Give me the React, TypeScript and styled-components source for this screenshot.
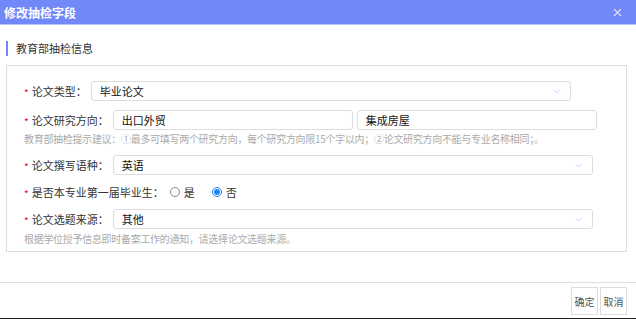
import React from 'react';
import styled, { createGlobalStyle } from 'styled-components';
import { ChevronDown, X } from 'lucide-react';

const GlobalStyle = createGlobalStyle`
  html, body {
    margin: 0;
    padding: 0;
    background: #fff;
  }
  * {
    box-sizing: border-box;
  }
`;

const FONT = `'Noto Sans CJK SC', 'Noto Sans', 'Liberation Sans', sans-serif`;

const App: React.FC = () => {
  return (
    <>
      <GlobalStyle />
      <Dialog>
        <Header>
          <span>修改抽检字段</span>
          <CloseBtn>
            <X size={13} strokeWidth={2} />
          </CloseBtn>
        </Header>
        <Body>
          <SectionTitle>教育部抽检信息</SectionTitle>
          <FormBox>
            <Row>
              <Label>论文类型：</Label>
              <Select>
                <span>毕业论文</span>
                <ChevronDown size={11} strokeWidth={1.5} />
              </Select>
            </Row>
            <Row $gap={9}>
              <Label>论文研究方向：</Label>
              <InputPair>
                <Input>出口外贸</Input>
                <Input>集成房屋</Input>
              </InputPair>
            </Row>
            <Hint>
              教育部抽检提示建议：①最多可填写两个研究方向，每个研究方向限15个字以内；②论文研究方向不能与专业名称相同；。
            </Hint>
            <Row $gap={10}>
              <Label>论文撰写语种：</Label>
              <Select>
                <span>英语</span>
                <ChevronDown size={11} strokeWidth={1.5} />
              </Select>
            </Row>
            <Row $gap={7}>
              <Label>是否本专业第一届毕业生：</Label>
              <RadioItem>
                <RadioDot />
                是
              </RadioItem>
              <RadioItem>
                <RadioDot $checked />
                否
              </RadioItem>
            </Row>
            <Row $gap={7}>
              <Label>论文选题来源：</Label>
              <Select>
                <span>其他</span>
                <ChevronDown size={11} strokeWidth={1.5} />
              </Select>
            </Row>
            <Hint $top={3}>根据学位授予信息即时备案工作的通知，请选择论文选题来源。</Hint>
          </FormBox>
        </Body>
        <Footer>
          <FooterBtn>确定</FooterBtn>
          <FooterBtn>取消</FooterBtn>
        </Footer>
      </Dialog>
    </>
  );
};

const Dialog = styled.div`
  width: 636px;
  height: 319px;
  display: flex;
  flex-direction: column;
  font-family: ${FONT};
  background: #fff;
  border-bottom: 1px solid #222;
`;

const Header = styled.div`
  height: 25px;
  flex-shrink: 0;
  background: #7088f8;
  border-bottom: 1px solid #b8c4fb;
  display: flex;
  align-items: center;
  justify-content: space-between;
  padding: 0 12px 0 4px;
  color: #fff;
  font-size: 12px;
  font-weight: bold;
`;

const CloseBtn = styled.span`
  display: flex;
  align-items: center;
  color: #dce2fd;
`;

const Body = styled.div`
  flex: 1;
  padding: 16px 9px 0 6px;
`;

const SectionTitle = styled.div`
  border-left: 2px solid #7088f8;
  padding-left: 8px;
  height: 15px;
  line-height: 15px;
  font-size: 11px;
  color: #333;
  margin-bottom: 9px;
`;

const FormBox = styled.div`
  border: 1px solid #ddd;
  padding: 15px 0 6px 17px;
  display: flex;
  flex-direction: column;
`;

const Row = styled.div<{ $gap?: number }>`
  display: flex;
  align-items: center;
  height: 20px;
  margin-top: ${(p) => p.$gap ?? 0}px;
`;

const Label = styled.span`
  font-size: 11px;
  color: #333;
  white-space: nowrap;
  margin-right: 4px;
  &::before {
    content: '*';
    color: #e00;
    font-size: 10px;
    margin-right: 3px;
    position: relative;
    top: 1px;
  }
`;

const Select = styled.div`
  width: 480px;
  height: 20px;
  border: 1px solid #ddd;
  border-radius: 3px;
  display: flex;
  align-items: center;
  justify-content: space-between;
  padding: 0 8px 0 8px;
  font-size: 11px;
  color: #111;
  svg {
    color: #a9b8f6;
  }
`;

const InputPair = styled.div`
  display: flex;
  gap: 4px;
`;

const Input = styled.div`
  width: 240px;
  height: 20px;
  border: 1px solid #ddd;
  border-radius: 3px;
  display: flex;
  align-items: center;
  padding: 0 8px;
  font-size: 11px;
  color: #111;
`;

const Hint = styled.div<{ $top?: number }>`
  font-size: 10px;
  color: #aaa;
  line-height: 13px;
  margin-top: ${(p) => p.$top ?? 2}px;
  white-space: nowrap;
  letter-spacing: -0.3px;
`;

const RadioItem = styled.label`
  display: flex;
  align-items: center;
  gap: 4px;
  font-size: 11px;
  color: #333;
  margin-right: 15px;
`;

const RadioDot = styled.span<{ $checked?: boolean }>`
  width: 10px;
  height: 10px;
  border-radius: 50%;
  border: 1px solid ${(p) => (p.$checked ? '#1f86ee' : '#888')};
  display: flex;
  align-items: center;
  justify-content: center;
  margin-left: 2px;
  &::after {
    content: '';
    width: 6px;
    height: 6px;
    border-radius: 50%;
    background: ${(p) => (p.$checked ? '#1f86ee' : 'transparent')};
  }
`;

const Footer = styled.div`
  height: 36px;
  flex-shrink: 0;
  border-top: 1px solid #ddd;
  display: flex;
  justify-content: flex-end;
  align-items: flex-start;
  gap: 2px;
  padding: 4px 9px 0 0;
`;

const FooterBtn = styled.button`
  width: 27px;
  height: 28px;
  padding: 0;
  border: 1px solid #ddd;
  background: #fff;
  font-family: ${FONT};
  font-size: 10px;
  color: #555;
  cursor: pointer;
`;

export default App;
